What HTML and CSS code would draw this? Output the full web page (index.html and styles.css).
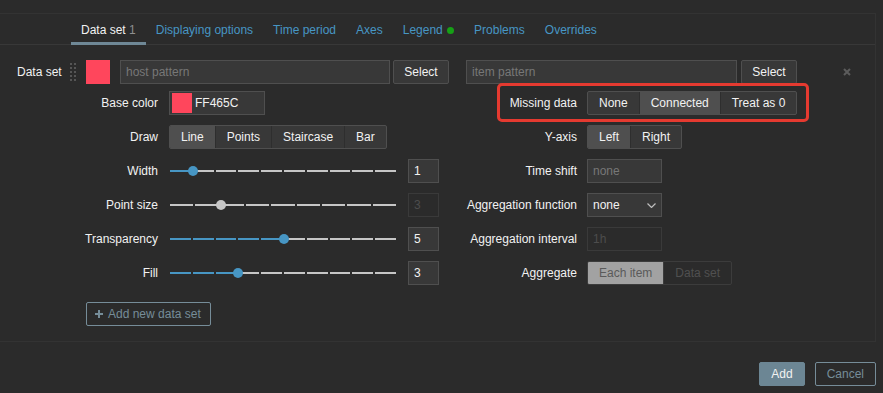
FILE: index.html
```html
<!DOCTYPE html>
<html lang="en">
<head>
    <meta charset="UTF-8">
    <meta name="viewport" content="width=device-width, initial-scale=1.0">
    <title>Graph widget - Data set</title>
    <link rel="stylesheet" href="styles.css">
</head>
<body>
    <div class="panel">
        <ul class="tabs">
            <li class="tab active">Data set <span class="count">1</span></li>
            <li class="tab">Displaying options</li>
            <li class="tab">Time period</li>
            <li class="tab">Axes</li>
            <li class="tab">Legend <span class="dot"></span></li>
            <li class="tab">Problems</li>
            <li class="tab">Overrides</li>
        </ul>

        <div class="tab-body">
            <div class="dataset-head">
                <span class="head-label">Data set</span>
                <svg class="handle" width="6" height="19" viewBox="0 0 6 19">
                    <rect x="0" y="0" width="2" height="2"/><rect x="4" y="0" width="2" height="2"/>
                    <rect x="0" y="4" width="2" height="2"/><rect x="4" y="4" width="2" height="2"/>
                    <rect x="0" y="8" width="2" height="2"/><rect x="4" y="8" width="2" height="2"/>
                    <rect x="0" y="12" width="2" height="2"/><rect x="4" y="12" width="2" height="2"/>
                    <rect x="0" y="16" width="2" height="2"/><rect x="4" y="16" width="2" height="2"/>
                </svg>
                <span class="swatch"></span>
                <input class="text pattern" type="text" placeholder="host pattern">
                <button class="btn-grey" type="button">Select</button>
                <input class="text pattern item" type="text" placeholder="item pattern">
                <button class="btn-grey select-item" type="button">Select</button>
                <button class="remove" type="button">
                    <svg width="8" height="8" viewBox="0 0 8 8"><path d="M1 1L7 7M7 1L1 7"/></svg>
                </button>
            </div>

            <div class="dataset-cols">
                <div class="col left">
                    <div class="row">
                        <span class="row-label">Base color</span>
                        <div class="color-picker"><span class="swatch small"></span>FF465C</div>
                    </div>
                    <div class="row">
                        <span class="row-label">Draw</span>
                        <div class="segmented">
                            <span class="seg checked">Line</span>
                            <span class="seg">Points</span>
                            <span class="seg">Staircase</span>
                            <span class="seg">Bar</span>
                        </div>
                    </div>
                    <div class="row">
                        <span class="row-label">Width</span>
                        <div class="range steps-10">
                            <div class="range-fill" style="width: 10%"></div>
                            <span class="range-thumb" style="left: 10%"></span>
                        </div>
                        <input class="text num" type="text" value="1">
                    </div>
                    <div class="row">
                        <span class="row-label">Point size</span>
                        <div class="range steps-9 disabled">
                            <div class="range-fill" style="width: 22.2%"></div>
                            <span class="range-thumb" style="left: 22.2%"></span>
                        </div>
                        <input class="text num" type="text" value="3" disabled>
                    </div>
                    <div class="row">
                        <span class="row-label">Transparency</span>
                        <div class="range steps-10">
                            <div class="range-fill" style="width: 50%"></div>
                            <span class="range-thumb" style="left: 50%"></span>
                        </div>
                        <input class="text num" type="text" value="5">
                    </div>
                    <div class="row">
                        <span class="row-label">Fill</span>
                        <div class="range steps-10">
                            <div class="range-fill" style="width: 30%"></div>
                            <span class="range-thumb" style="left: 30%"></span>
                        </div>
                        <input class="text num" type="text" value="3">
                    </div>
                </div>

                <div class="col right">
                    <div class="row highlight">
                        <span class="row-label">Missing data</span>
                        <div class="segmented">
                            <span class="seg">None</span>
                            <span class="seg checked">Connected</span>
                            <span class="seg">Treat as 0</span>
                        </div>
                    </div>
                    <div class="row">
                        <span class="row-label">Y-axis</span>
                        <div class="segmented">
                            <span class="seg checked">Left</span>
                            <span class="seg">Right</span>
                        </div>
                    </div>
                    <div class="row">
                        <span class="row-label">Time shift</span>
                        <input class="text short" type="text" placeholder="none">
                    </div>
                    <div class="row">
                        <span class="row-label">Aggregation function</span>
                        <div class="select">
                            <span>none</span>
                            <svg width="9" height="5" viewBox="0 0 9 5"><path d="M0.5 0.5L4.5 4.5L8.5 0.5"/></svg>
                        </div>
                    </div>
                    <div class="row">
                        <span class="row-label">Aggregation interval</span>
                        <input class="text short" type="text" value="1h" disabled>
                    </div>
                    <div class="row">
                        <span class="row-label">Aggregate</span>
                        <div class="segmented disabled">
                            <span class="seg checked">Each item</span>
                            <span class="seg">Data set</span>
                        </div>
                    </div>
                </div>
            </div>

            <button class="btn-alt add-set" type="button">
                <svg width="8" height="8" viewBox="0 0 8 8"><path d="M4 0V8M0 4H8"/></svg>
                Add new data set
            </button>
        </div>
    </div>

    <div class="footer">
        <button class="btn" type="button">Add</button>
        <button class="btn-alt" type="button">Cancel</button>
    </div>
</body>
</html>
```

FILE: styles.css
```css
body {
    margin: 0;
    background: #2b2b2b;
    color: #f2f2f2;
    font-family: "Liberation Sans", Arial, sans-serif;
    font-size: 12px;
}
button,
input {
    font-family: inherit;
    font-size: 12px;
    box-sizing: border-box;
    margin: 0;
}
.panel {
    box-sizing: border-box;
    width: 876px;
    margin-top: 13px;
    border: 1px solid #333;
    border-left: none;
}

/* tabs */
.tabs {
    display: flex;
    height: 30px;
    margin: 0;
    padding: 0 0 0 71px;
    list-style: none;
    border-bottom: 1px solid #383838;
}
.tab {
    height: 31px;
    box-sizing: border-box;
    padding: 9px 10px 5px;
    line-height: 14px;
    color: #4796c4;
    border-bottom: 3px solid transparent;
    white-space: nowrap;
}
.tab.active {
    color: #f2f2f2;
    border-bottom-color: #6f8896;
}
.count {
    color: #8f8f8f;
}
.dot {
    display: inline-block;
    width: 7px;
    height: 7px;
    margin-left: 1px;
    border-radius: 50%;
    background: #16a016;
}

.tab-body {
    padding: 15px 0 15px 17px;
}

/* data set header */
.dataset-head {
    display: flex;
    align-items: center;
    height: 24px;
}
.head-label {
    width: 45px;
}
.handle {
    margin-left: 8px;
    fill: #555;
}
.swatch {
    width: 24px;
    height: 24px;
    margin-left: 10px;
    background: #ff465c;
}
.swatch.small {
    width: 20px;
    height: 20px;
    margin: 0 3px 0 0;
}
.text {
    height: 24px;
    padding: 0 5px;
    background: #383838;
    border: 1px solid #4f4f4f;
    color: #f2f2f2;
    outline: none;
}
.text::placeholder {
    color: #777;
}
.text:disabled {
    background: #2b2b2b;
    border-color: #3a3a3a;
    color: #4d4d4d;
}
.pattern {
    width: 270px;
    margin-left: 10px;
}
.pattern.item {
    width: 271px;
    margin-left: 17px;
}
.btn-grey {
    width: 56px;
    height: 24px;
    margin-left: 3px;
    padding: 0;
    background: #383838;
    border: 1px solid #4f4f4f;
    border-radius: 2px;
    color: #f2f2f2;
}
.btn-grey.select-item {
    margin-left: 4px;
}
.remove {
    display: flex;
    margin-left: 46px;
    padding: 0;
    background: none;
    border: none;
}
.remove svg {
    stroke: #5c5c5c;
    stroke-width: 2;
}

/* columns */
.dataset-cols {
    display: flex;
    margin-top: 7px;
}
.col {
    display: flex;
    flex-direction: column;
    gap: 10px;
}
.col.left {
    width: 423px;
}
.row {
    display: flex;
    align-items: center;
    height: 24px;
}
.row-label {
    text-align: right;
    white-space: nowrap;
}
.left .row-label {
    width: 141px;
    margin-right: 11px;
}
.right .row-label {
    width: 137px;
    margin-right: 10px;
}
.highlight {
    position: relative;
}
.highlight::after {
    content: "";
    position: absolute;
    left: 57px;
    top: -8px;
    bottom: -7px;
    width: 312px;
    box-sizing: border-box;
    border: 3px solid #e53a30;
    border-radius: 5px;
}

.color-picker {
    display: flex;
    align-items: center;
    box-sizing: border-box;
    width: 96px;
    height: 24px;
    padding: 0 2px;
    background: #383838;
    border: 1px solid #4f4f4f;
}

/* radio button lists */
.segmented {
    display: flex;
    height: 24px;
    box-sizing: border-box;
    border: 1px solid #4f4f4f;
    border-radius: 2px;
    background: #383838;
    overflow: hidden;
}
.seg {
    padding: 0 11px;
    line-height: 22px;
    white-space: nowrap;
}
.seg + .seg {
    border-left: 1px solid #2e2e2e;
}
.seg.checked {
    background: #4f4f4f;
}
.segmented.disabled {
    background: #2b2b2b;
    border-color: #3c3c3c;
    color: #505050;
}
.segmented.disabled .seg + .seg {
    border-left-color: #3c3c3c;
}
.segmented.disabled .seg.checked {
    background: #a2a2a2;
    color: #5a5a5a;
}

/* range sliders */
.range {
    --step: 22.8px;
    position: relative;
    width: 228px;
    height: 2px;
    margin-left: 1px;
    background: repeating-linear-gradient(to right, #c6c6c6 0, #c6c6c6 calc(var(--step) - 2px), #2b2b2b calc(var(--step) - 2px), #2b2b2b var(--step));
}
.range.steps-9 {
    --step: 25.33px;
}
.range-fill {
    position: absolute;
    left: 0;
    top: 0;
    height: 100%;
    background: repeating-linear-gradient(to right, #4796c4 0, #4796c4 calc(var(--step) - 2px), #2b2b2b calc(var(--step) - 2px), #2b2b2b var(--step));
}
.range.disabled .range-fill {
    display: none;
}
.range-thumb {
    position: absolute;
    top: 50%;
    width: 10px;
    height: 10px;
    border-radius: 50%;
    background: #4796c4;
    transform: translate(-50%, -50%);
}
.range.disabled .range-thumb {
    background: #c6c6c6;
}
.num {
    width: 31px;
    margin-left: 10px;
}
.short {
    width: 75px;
}
.select {
    display: flex;
    align-items: center;
    justify-content: space-between;
    box-sizing: border-box;
    width: 75px;
    height: 24px;
    padding: 0 5px;
    background: #383838;
    border: 1px solid #4f4f4f;
}
.select svg {
    fill: none;
    stroke: #bdbdbd;
    stroke-width: 1.2;
}

/* buttons */
.btn-alt {
    height: 24px;
    padding: 0 11px;
    background: none;
    border: 1px solid #768d99;
    border-radius: 2px;
    color: #768d99;
}
.add-set {
    display: flex;
    align-items: center;
    gap: 5px;
    margin: 17px 0 0 69px;
    padding: 0 9px 0 8px;
}
.add-set svg {
    stroke: #768d99;
    stroke-width: 2;
}
.btn {
    height: 24px;
    padding: 0 11px;
    background: #6c8694;
    border: 1px solid #6c8694;
    border-radius: 2px;
    color: #f2f2f2;
}
.footer {
    display: flex;
    justify-content: flex-end;
    gap: 10px;
    width: 876px;
    padding-top: 20px;
}
```
